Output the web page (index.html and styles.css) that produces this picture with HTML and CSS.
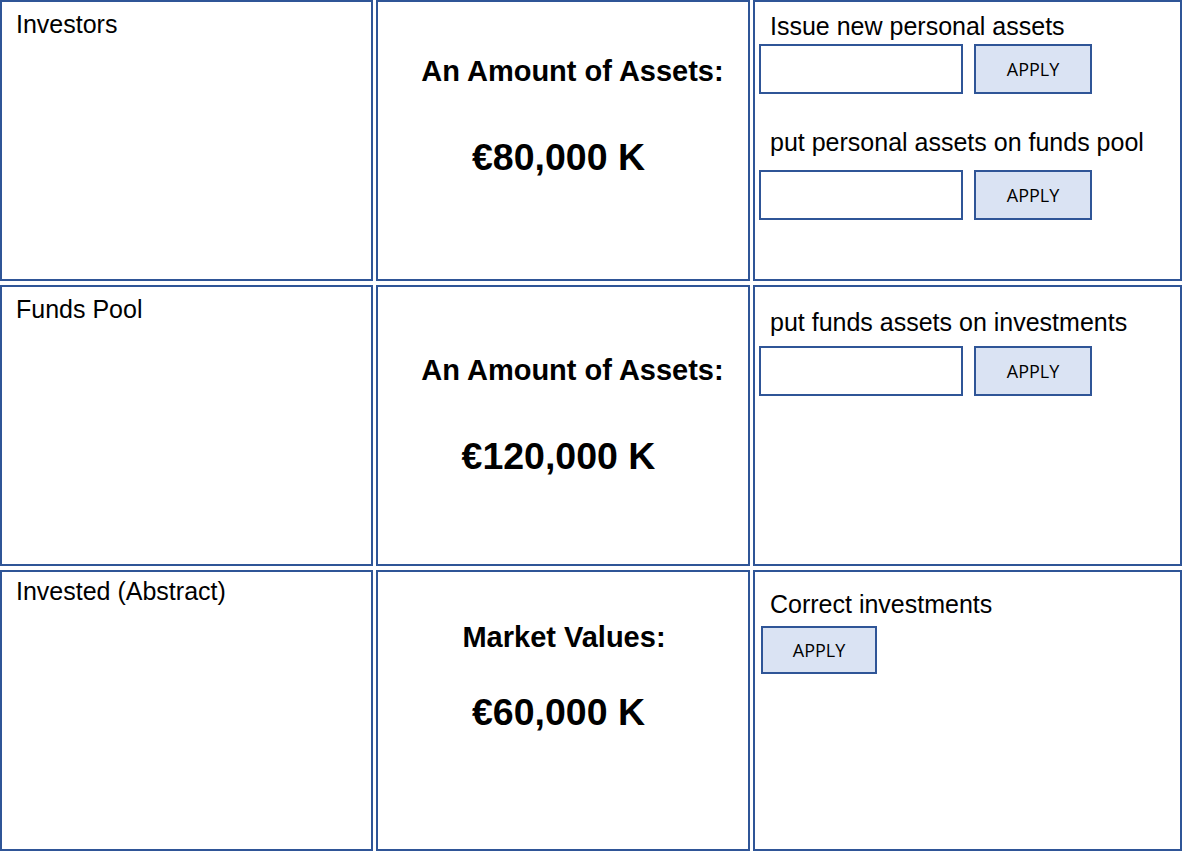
FILE: index.html
```html
<!DOCTYPE html>
<html lang="en">
<head>
<meta charset="utf-8">
<title>Assets</title>
<link rel="stylesheet" href="styles.css">
</head>
<body>
<div class="board">
  <section class="cell name-cell"><div class="name">Investors</div></section>
  <section class="cell amount-cell amount-r1">
    <div class="amount-title">An Amount of Assets:</div>
    <div class="amount-value">€80,000 K</div>
  </section>
  <section class="cell action-cell action-r1">
    <div class="action-label">Issue new personal assets</div>
    <div class="form-row form-tight">
      <input class="field" type="text" aria-label="Issue new personal assets">
      <button class="apply" type="button">APPLY</button>
    </div>
    <div class="action-label label-second">put personal assets on funds pool</div>
    <div class="form-row form-loose">
      <input class="field" type="text" aria-label="put personal assets on funds pool">
      <button class="apply" type="button">APPLY</button>
    </div>
  </section>

  <section class="cell name-cell"><div class="name">Funds Pool</div></section>
  <section class="cell amount-cell amount-r2">
    <div class="amount-title">An Amount of Assets:</div>
    <div class="amount-value">€120,000 K</div>
  </section>
  <section class="cell action-cell action-r2">
    <div class="action-label">put funds assets on investments</div>
    <div class="form-row form-mid">
      <input class="field" type="text" aria-label="put funds assets on investments">
      <button class="apply" type="button">APPLY</button>
    </div>
  </section>

  <section class="cell name-cell name-r3"><div class="name">Invested (Abstract)</div></section>
  <section class="cell amount-cell amount-r3">
    <div class="amount-title market">Market Values:</div>
    <div class="amount-value">€60,000 K</div>
  </section>
  <section class="cell action-cell action-r3">
    <div class="action-label">Correct investments</div>
    <button class="apply apply-solo" type="button">APPLY</button>
  </section>
</div>
</body>
</html>
```

FILE: styles.css
```css
html, body {
  margin: 0;
  padding: 0;
  background: #ffffff;
}

body {
  font-family: "Liberation Sans", Arial, sans-serif;
  color: #000000;
}

.board {
  display: grid;
  grid-template-columns: 373px 374px 429px;
  grid-template-rows: 281px 281px 281px;
  column-gap: 3px;
  row-gap: 4px;
  width: 1182px;
  height: 851px;
}

.cell {
  box-sizing: border-box;
  border: 2px solid #2f5597;
  display: flex;
  flex-direction: column;
  min-width: 0;
}

/* column 1 */
.name-cell {
  padding: 8px 14px;
}

.name-r3 {
  padding-top: 5px;
}

.name {
  font-size: 25px;
  line-height: 1.13;
}

/* column 2 */
.amount-cell {
  align-items: center;
  font-weight: bold;
}

.amount-title {
  font-size: 29px;
  line-height: 1.15;
  padding-left: 19px;
}

.amount-title.market {
  padding-left: 2px;
}

.amount-value {
  font-size: 37.5px;
  line-height: 1.15;
  padding-right: 9px;
}

.amount-r1 { padding-top: 53px; }
.amount-r1 .amount-value { margin-top: 48px; }

.amount-r2 { padding-top: 67px; }
.amount-r2 .amount-value { margin-top: 48px; }

.amount-r3 { padding-top: 49px; }
.amount-r3 .amount-value { margin-top: 37px; }

/* column 3 */
.action-cell {
  align-items: flex-start;
}

.action-label {
  font-size: 25px;
  line-height: 1.13;
  padding-left: 15px;
  white-space: nowrap;
}

.action-r1 { padding-top: 10px; }
.action-r2 { padding-top: 21px; }
.action-r3 { padding-top: 18px; }

.label-second {
  margin-top: 34px;
}

.form-row {
  display: flex;
  gap: 11px;
  margin-left: 4px;
}

.form-tight { margin-top: 4px; }
.form-loose { margin-top: 13px; }
.form-mid { margin-top: 10px; }

.field {
  box-sizing: border-box;
  width: 204px;
  height: 50px;
  margin: 0;
  padding: 0 8px;
  border: 2px solid #2f5597;
  border-radius: 0;
  background: #ffffff;
  outline: none;
}

.apply {
  box-sizing: border-box;
  width: 118px;
  height: 50px;
  margin: 0;
  padding: 0;
  border: 2px solid #2f5597;
  border-radius: 0;
  background: #dae3f3;
  color: #000000;
  font-family: "Open Sans", sans-serif;
  font-size: 18px;
  line-height: 1;
}

.apply-solo {
  width: 116px;
  height: 48px;
  margin-top: 8px;
  margin-left: 6px;
}
```
